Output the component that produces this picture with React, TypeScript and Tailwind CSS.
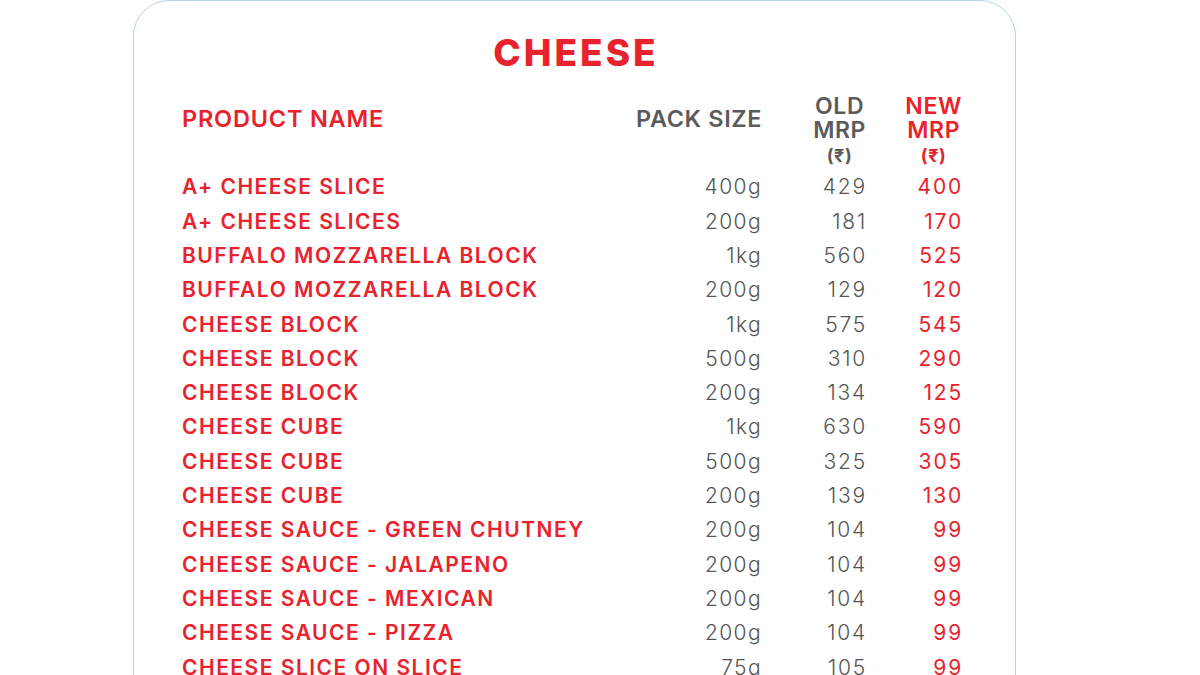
import React from "react";

const rows: [string, string, string, string][] = [
  ["A+ CHEESE SLICE", "400g", "429", "400"],
  ["A+ CHEESE SLICES", "200g", "181", "170"],
  ["BUFFALO MOZZARELLA BLOCK", "1kg", "560", "525"],
  ["BUFFALO MOZZARELLA BLOCK", "200g", "129", "120"],
  ["CHEESE BLOCK", "1kg", "575", "545"],
  ["CHEESE BLOCK", "500g", "310", "290"],
  ["CHEESE BLOCK", "200g", "134", "125"],
  ["CHEESE CUBE", "1kg", "630", "590"],
  ["CHEESE CUBE", "500g", "325", "305"],
  ["CHEESE CUBE", "200g", "139", "130"],
  ["CHEESE SAUCE - GREEN CHUTNEY", "200g", "104", "99"],
  ["CHEESE SAUCE - JALAPENO", "200g", "104", "99"],
  ["CHEESE SAUCE - MEXICAN", "200g", "104", "99"],
  ["CHEESE SAUCE - PIZZA", "200g", "104", "99"],
  ["CHEESE SLICE ON SLICE", "75g", "105", "99"],
];

export default function App() {
  return (
    <div
      className="w-[1200px] h-[675px] overflow-hidden bg-white"
      style={{ fontFamily: "Inter, 'Noto Sans', sans-serif" }}
    >
      <div className="ml-[133px] w-[883px] h-[720px] rounded-[36px] border border-[#b5d2ec] bg-white">
        <div className="pt-[29px] pl-[3px] text-center text-[37px] leading-[46px] font-extrabold tracking-[3px] text-[#e8232d]">
          CHEESE
        </div>
        <div className="pl-[48px] mt-[18px] grid grid-cols-[439px_141px_104px_96px]">
          <div className="pt-[13px] text-[23.5px] leading-[24px] font-semibold tracking-[0.8px] text-[#e8232d]">
            PRODUCT NAME
          </div>
          <div className="pt-[13px] text-right text-[23.5px] leading-[24px] font-semibold tracking-[0.6px] text-[#5b5b5b]">
            PACK SIZE
          </div>
          <div className="flex justify-end">
            <div className="text-center text-[23px] leading-[24px] font-semibold tracking-[0.6px] text-[#5b5b5b]">
              OLD
              <br />
              MRP
              <br />
              <span className="text-[18px] leading-[26px] font-bold">(₹)</span>
            </div>
          </div>
          <div className="flex justify-end">
            <div className="text-center text-[23px] leading-[24px] font-semibold tracking-[0.6px] text-[#e8232d]">
              NEW
              <br />
              MRP
              <br />
              <span className="text-[18px] leading-[26px] font-bold">(₹)</span>
            </div>
          </div>
        </div>
        <div className="pl-[48px] mt-[1px] flex flex-col">
          {rows.map((r, i) => (
            <div
              key={i}
              className="grid grid-cols-[439px_141px_105px_96px] h-[34.3px] items-center text-[21px]"
            >
              <div className="font-semibold tracking-[1.5px] text-[#e8232d]">{r[0]}</div>
              <div className="text-right font-light tracking-[1.4px] text-[#555]">{r[1]}</div>
              <div className="text-right font-light tracking-[1.8px] text-[#555]">{r[2]}</div>
              <div className="text-right font-normal tracking-[1.8px] text-[#e8232d]">{r[3]}</div>
            </div>
          ))}
        </div>
      </div>
    </div>
  );
}
